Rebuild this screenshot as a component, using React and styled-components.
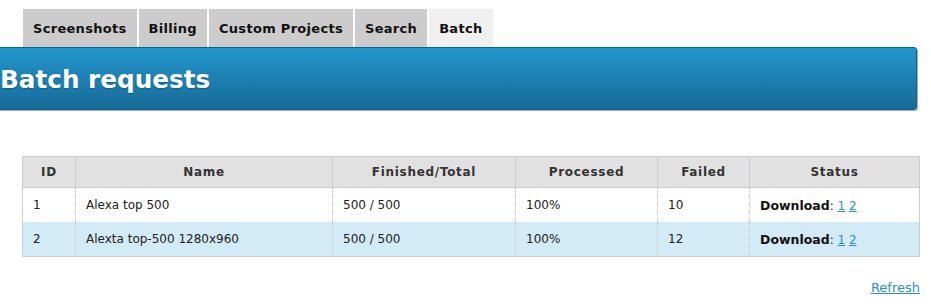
import React from 'react';
import styled, { createGlobalStyle } from 'styled-components';

const rows = [
  { id: 1, name: 'Alexa top 500', done: '500 / 500', processed: '100%', failed: 10 },
  { id: 2, name: 'Alexta top-500 1280x960', done: '500 / 500', processed: '100%', failed: 12 },
];

const tabs = ['Screenshots', 'Billing', 'Custom Projects', 'Search', 'Batch'];

const columns = [
  { title: 'ID', width: 52 },
  { title: 'Name', width: 256 },
  { title: 'Finished/Total', width: 182 },
  { title: 'Processed', width: 141 },
  { title: 'Failed', width: 91 },
  { title: 'Status', width: 169 },
];

function App() {
  return (
    <Page>
      <GlobalStyle />
      <Tabs>
        {tabs.map((t) => (
          <Tab key={t} $active={t === 'Batch'}>{t}</Tab>
        ))}
      </Tabs>

      <Banner>
        <Title>Batch requests</Title>
      </Banner>

      <Content>
        <Table>
          <thead>
            <tr>
              {columns.map((c) => (
                <HeadCell key={c.title} $width={c.width}>{c.title}</HeadCell>
              ))}
            </tr>
          </thead>
          <tbody>
            {rows.map((r, i) => (
              <Row key={r.id} $odd={i % 2 === 1}>
                <Cell>{r.id}</Cell>
                <Cell>{r.name}</Cell>
                <Cell>{r.done}</Cell>
                <Cell>{r.processed}</Cell>
                <Cell>{r.failed}</Cell>
                <Cell>
                  <Strong>Download</Strong>: <Link href="#">1</Link> <Link href="#">2</Link>
                </Cell>
              </Row>
            ))}
          </tbody>
        </Table>

        <Footer>
          <Link href="#">Refresh</Link>
        </Footer>
      </Content>
    </Page>
  );
}
export default App;

const GlobalStyle = createGlobalStyle`
  body {
    margin: 0;
    background: #fff;
    font-family: "DejaVu Sans", sans-serif;
    color: #222;
  }
`;

const Page = styled.div`
  width: 931px;
  padding-top: 9px;
  overflow: hidden;
`;

const Tabs = styled.div`
  display: flex;
  gap: 2px;
  margin-left: 23px;
  height: 38px;
`;

const Tab = styled.div`
  display: flex;
  align-items: center;
  padding: 1px 10px 0 10px;
  background: ${(p) => (p.$active ? '#f0f0f0' : '#cccccc')};
  font-size: 13px;
  font-weight: bold;
  letter-spacing: 0.3px;
  color: #111;
`;

const Banner = styled.div`
  margin-left: -20px;
  width: 937px;
  height: 63px;
  box-sizing: border-box;
  border: 1px solid #135f86;
  border-radius: 3px;
  background: linear-gradient(to bottom, #2397cd, #166a96);
  box-shadow: 1px 1px 1px rgba(0, 0, 0, 0.35);
  display: flex;
  align-items: center;
  padding-left: 19px;
`;

const Title = styled.h1`
  margin: 0;
  padding-top: 2px;
  font-size: 24.7px;
  font-weight: bold;
  color: #fff;
  text-shadow: 0 1px 1px rgba(0, 0, 0, 0.25);
`;

const Content = styled.div`
  padding: 46px 11px 0 22px;
`;

const Table = styled.table`
  width: 898px;
  table-layout: fixed;
  border-collapse: collapse;
  border: 1px solid #cccccc;
  font-size: 12px;
`;

const HeadCell = styled.th`
  width: ${(p) => p.$width}px;
  height: 30px;
  padding: 0;
  background: #e1e1e1;
  border: 1px solid #cccccc;
  font-size: 12px;
  font-weight: bold;
  letter-spacing: 0.7px;
  color: #333;
  text-align: center;
  vertical-align: middle;
`;

const Row = styled.tr`
  background: ${(p) => (p.$odd ? '#d3eaf7' : '#ffffff')};
`;

const Cell = styled.td`
  height: 34px;
  padding: 0 10px;
  border-left: 1px dotted #c4c4c4;
  color: #222;
  vertical-align: middle;
  white-space: nowrap;
`;

const Strong = styled.b`
  font-weight: bold;
  color: #111;
  font-size: 12.5px;
`;

const Link = styled.a`
  color: #2a8fc6;
  text-decoration: underline;
`;

const Footer = styled.div`
  display: flex;
  justify-content: flex-end;
  padding-top: 23px;
  font-size: 13px;
`;
